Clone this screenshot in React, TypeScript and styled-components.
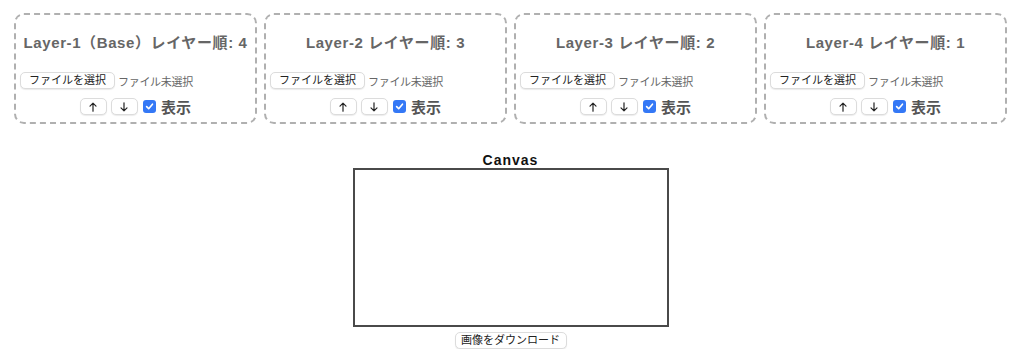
import styled, { createGlobalStyle } from 'styled-components';

const GlobalStyle = createGlobalStyle`
    body {
        margin: 8px;
        background: #ffffff;
        font-family: "Liberation Sans", Arial, "Noto Sans CJK JP", sans-serif;
        color: #222;
    }
`;

const Page = styled.div`
    padding: 5px 9px 0 6px;
`;

const LayerRow = styled.div`
    display: flex;
    gap: 7px;
`;

const LayerCard = styled.div`
    flex: 1;
    min-width: 0;
    border: 2px dashed #b0b0b0;
    border-radius: 10px;
    padding: 10px 4px 7px;
    display: flex;
    flex-direction: column;
`;

const LayerTitle = styled.h3`
    margin: 9px 0 20px;
    font-size: 15px;
    line-height: 18px;
    font-weight: bold;
    letter-spacing: 0.6px;
    color: #666;
    text-align: center;
    white-space: nowrap;
`;

const FileRow = styled.div`
    display: flex;
    align-items: center;
    gap: 3px;
    height: 17px;
`;

const Button = styled.button`
    height: 17px;
    padding: 0 8px;
    background: #fff;
    border: 1px solid #dcdcdc;
    border-radius: 5px;
    box-shadow: 0 1px 1px rgba(0, 0, 0, 0.08);
    font-family: "Liberation Sans", Arial, "Noto Sans CJK JP", sans-serif;
    font-size: 11px;
    line-height: 15px;
    color: #222;
    display: inline-flex;
    align-items: center;
    justify-content: center;
    cursor: pointer;
`;

const NoFile = styled.span`
    font-size: 11px;
    letter-spacing: -0.3px;
    color: #666;
    font-family: "Noto Sans CJK JP", sans-serif;
`;

const ControlRow = styled.div`
    margin-top: 9px;
    display: flex;
    justify-content: center;
    align-items: center;
    height: 17px;
`;

const ArrowButton = styled(Button)`
    width: 27px;
    padding: 0;
    margin-right: 4px;
`;

const CheckBox = styled.span`
    width: 13px;
    height: 13px;
    border-radius: 3px;
    background: #3478f6;
    display: inline-flex;
    align-items: center;
    justify-content: center;
    margin: 0 5px 0 1px;
`;

const ShowLabel = styled.span`
    font-size: 15px;
    font-weight: bold;
    color: #555;
    font-family: "Noto Sans CJK JP", sans-serif;
`;

const CanvasSection = styled.div`
    display: flex;
    flex-direction: column;
    align-items: center;
    margin-top: 28px;
`;

const CanvasTitle = styled.h3`
    margin: 0;
    font-size: 14px;
    line-height: 16px;
    letter-spacing: 1px;
    font-weight: bold;
    color: #111;
`;

const CanvasBox = styled.div`
    width: 312px;
    height: 155px;
    border: 2px solid #4a4a4a;
    background: #fff;
`;

const DownloadButton = styled(Button)`
    margin-top: 5px;
    width: 112px;
    padding: 0;
`;

const layers = [
    { name: 'Layer-1（Base）', order: 4 },
    { name: 'Layer-2 ', order: 3 },
    { name: 'Layer-3 ', order: 2 },
    { name: 'Layer-4 ', order: 1 },
];

function Arrow({ down }: { down?: boolean }) {
    return (
        <svg width="8" height="10" viewBox="0 0 8 10" style={{ transform: down ? 'rotate(180deg)' : undefined }}>
            <path d="M4 9.2 V1.2 M1 4.2 L4 1.2 L7 4.2" fill="none" stroke="#222" strokeWidth="1.2" strokeLinecap="round" strokeLinejoin="round" />
        </svg>
    );
}

function Check() {
    return (
        <svg width="9" height="9" viewBox="0 0 10 10">
            <path d="M1.8 5.2 L4.1 7.4 L8.3 2.4" fill="none" stroke="#fff" strokeWidth="1.8" strokeLinecap="round" strokeLinejoin="round" />
        </svg>
    );
}

function App() {
    return (
        <Page>
            <GlobalStyle />
            <LayerRow>
                {layers.map((layer) => (
                    <LayerCard key={layer.order}>
                        <LayerTitle>
                            {layer.name}レイヤー順: {layer.order}
                        </LayerTitle>
                        <FileRow>
                            <Button>ファイルを選択</Button>
                            <NoFile>ファイル未選択</NoFile>
                        </FileRow>
                        <ControlRow>
                            <ArrowButton aria-label="上へ">
                                <Arrow />
                            </ArrowButton>
                            <ArrowButton aria-label="下へ">
                                <Arrow down />
                            </ArrowButton>
                            <CheckBox>
                                <Check />
                            </CheckBox>
                            <ShowLabel>表示</ShowLabel>
                        </ControlRow>
                    </LayerCard>
                ))}
            </LayerRow>
            <CanvasSection>
                <CanvasTitle>Canvas</CanvasTitle>
                <CanvasBox />
                <DownloadButton>画像をダウンロード</DownloadButton>
            </CanvasSection>
        </Page>
    );
}

export default App;
